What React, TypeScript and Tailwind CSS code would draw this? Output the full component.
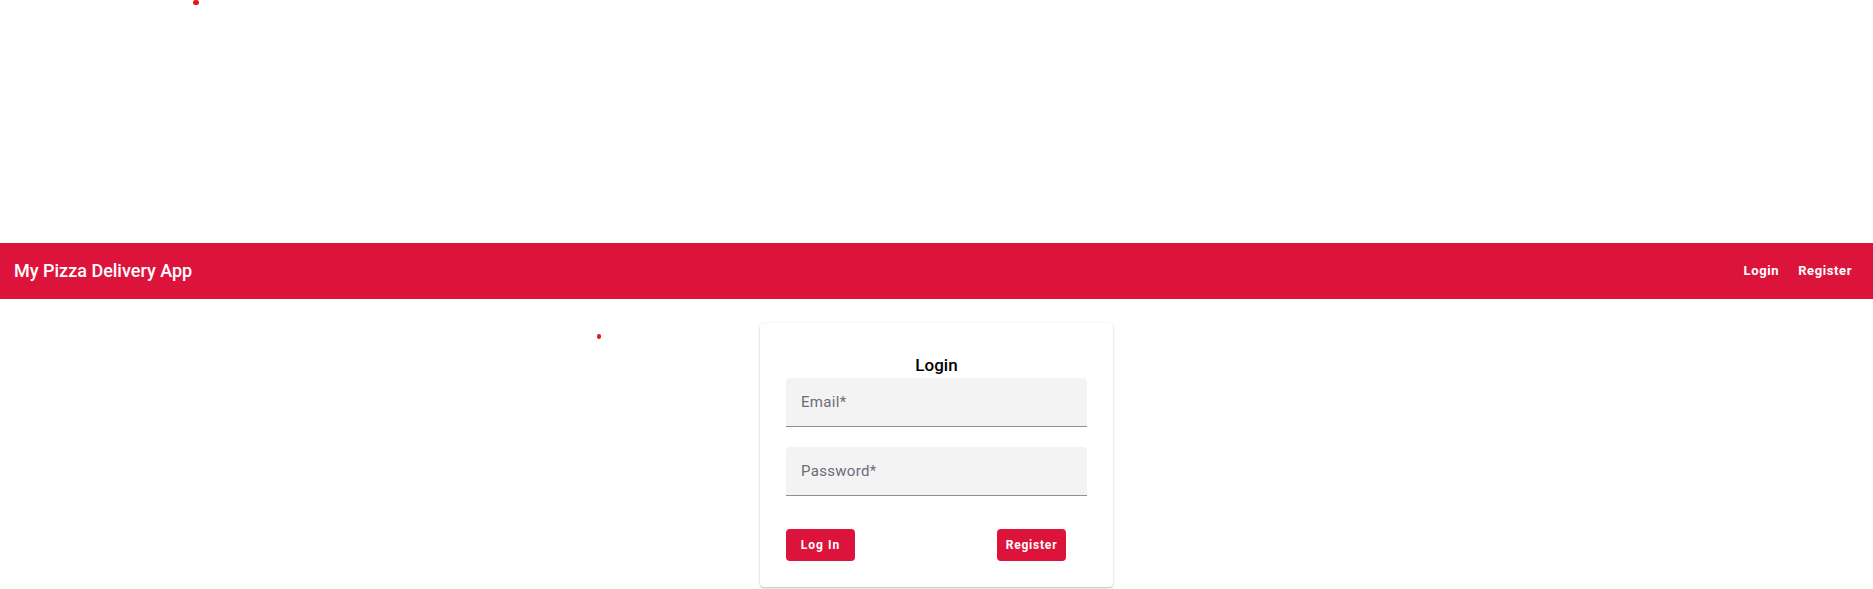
import React from 'react';

function NavBar() {
    return (
        <header className="flex h-[56px] items-center justify-between bg-[#dc143c] pl-[14px] pr-[21px] text-white">
            <h1 className="text-[18px] font-medium leading-none">My Pizza Delivery App</h1>
            <nav className="flex items-center gap-[19px]">
                <a className="text-[13px] font-bold tracking-[0.6px]">Login</a>
                <a className="text-[13px] font-bold tracking-[0.6px]">Register</a>
            </nav>
        </header>
    );
}

function Field({ label }: { label: string }) {
    return (
        <div className="flex h-[49px] items-center rounded-t-[4px] border-b border-[#8f8f8f] bg-[#f3f3f3] pl-[15px]">
            <span className="text-[15px] tracking-[0.3px] text-[#6c6c78]">{label}</span>
        </div>
    );
}

function LoginCard() {
    return (
        <div className="w-[353px] rounded-[4px] bg-white px-[26px] pb-[26px] pt-[30px] shadow-[0_1px_3px_rgba(0,0,0,0.2),0_1px_1px_rgba(0,0,0,0.1)]">
            <h2 className="text-center text-[17px] font-medium leading-[24px] text-black">Login</h2>
            <div className="mt-[1px] flex flex-col gap-[20px]">
                <Field label="Email*" />
                <Field label="Password*" />
            </div>
            <div className="mt-[33px] flex justify-between pr-[21px]">
                <button className="h-[32px] w-[69px] rounded-[4px] bg-[#dc143c] text-[12px] font-bold tracking-[1px] text-white">
                    Log In
                </button>
                <button className="h-[32px] w-[69px] rounded-[4px] bg-[#dc143c] text-[12px] font-bold tracking-[0.8px] text-white">
                    Register
                </button>
            </div>
        </div>
    );
}

export default function App() {
    return (
        <div className="relative min-h-[589px] bg-white font-['Roboto',sans-serif]">
            {/* stray red dots */}
            <span className="absolute left-[193px] top-0 h-[5px] w-[6px] rounded-full bg-[#e8141c]" />
            <span className="absolute left-[597px] top-[334px] h-[5px] w-[4px] rounded-full bg-[#e8141c]" />

            <div className="h-[243px]" />
            <NavBar />
            <main className="flex justify-center pt-[24px]">
                <LoginCard />
            </main>
        </div>
    );
}
